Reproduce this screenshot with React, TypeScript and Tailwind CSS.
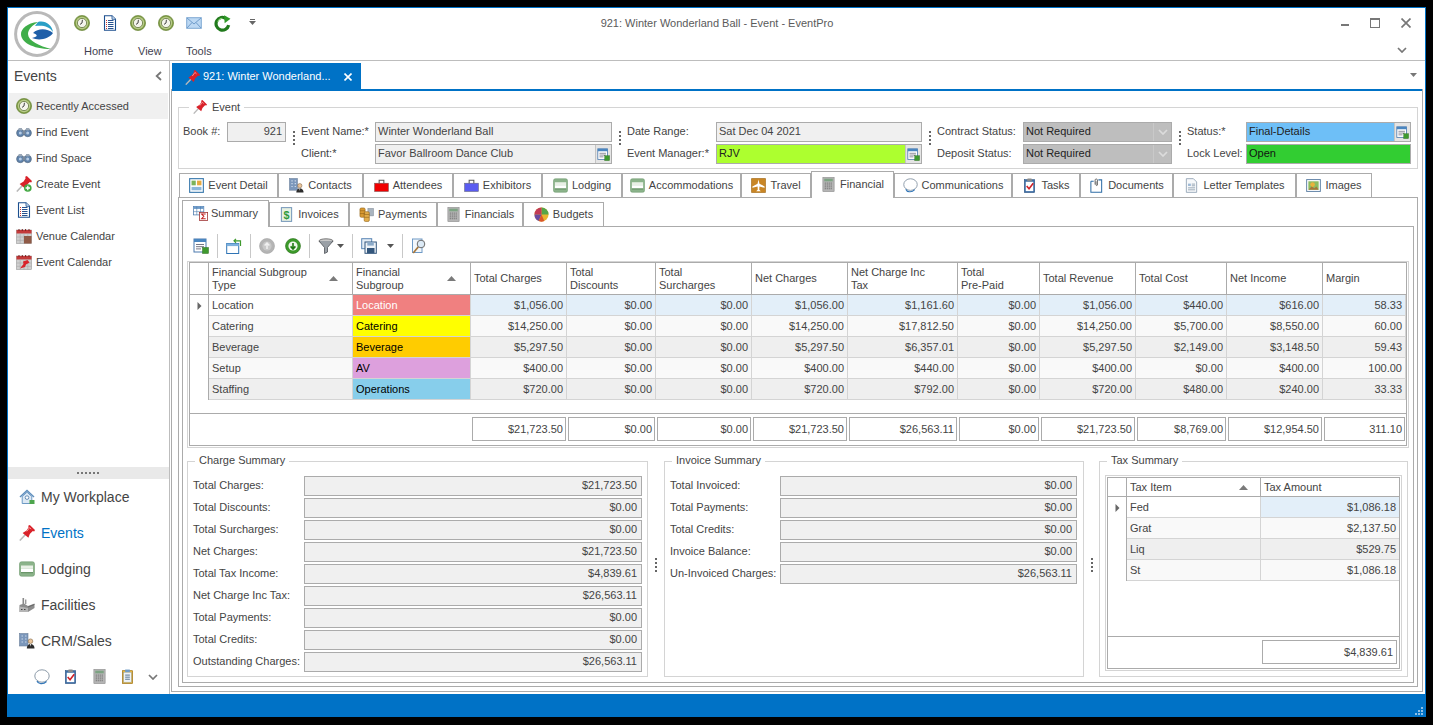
import React from "react";

type IP = { s?: number };
const Svg = ({ s = 16, children, vb = "0 0 16 16" }: { s?: number; children: React.ReactNode; vb?: string }) => (
  <svg viewBox={vb} width={s} height={s} className="shrink-0 block">{children}</svg>
);

const Clock = ({ s = 16 }: IP) => (
  <Svg s={s}>
    <circle cx="8" cy="8" r="7.6" fill="#7f9c46" stroke="#5f7d2c" strokeWidth="0.6" />
    <circle cx="8" cy="8" r="6.2" fill="#b9cc8a" />
    <circle cx="8" cy="8" r="4.6" fill="#f4f4ec" stroke="#55682f" strokeWidth="0.7" />
    <path d="M8.4 4.8 L8 8 L6 9.4" fill="none" stroke="#444" strokeWidth="1" />
  </Svg>
);
const DocList = ({ s = 16 }: IP) => (
  <Svg s={s}>
    <path d="M2.5 .8 H10 L13.5 4.3 V15.2 H2.5Z" fill="#fff" stroke="#1c4f8f" strokeWidth="1.1" />
    <path d="M10 .8 V4.3 H13.5" fill="#cfe0f2" stroke="#1c4f8f" strokeWidth=".8" />
    <path d="M6 5.5 H11.5 M6 7.5 H11.5 M6 9.5 H11.5 M6 11.5 H11.5 M6 13.5 H11.5" stroke="#27528f" strokeWidth="1" />
    <path d="M4 5.5 H5 M4 7.5 H5 M4 9.5 H5 M4 11.5 H5 M4 13.5 H5" stroke="#d2332b" strokeWidth="1" />
  </Svg>
);
const Mail = ({ s = 16 }: IP) => (
  <Svg s={s}>
    <rect x=".7" y="2.7" width="14.6" height="10.6" fill="#bcd8f3" stroke="#7fa9d3" />
    <path d="M1 3 L8 9 L15 3 M1 13 L6 7.5 M15 13 L10 7.5" fill="none" stroke="#6f9ccb" />
  </Svg>
);
const Refresh = ({ s = 16 }: IP) => (
  <Svg s={s}>
    <path d="M13.8 9.5 A6 6 0 1 1 11.5 3.4" fill="none" stroke="#217a1c" strokeWidth="3" />
    <path d="M9.5 .3 L15.5 3.5 L10 7.8Z" fill="#2f9a27" />
    <path d="M3.5 6.5 A5 5 0 0 1 8 3" fill="none" stroke="#8ed47c" strokeWidth="1" />
  </Svg>
);
const pinBody = "M3.6 8 L7.6 5.4 L9.6 2.2 L9.2 .8 L10.8 0 L16 5 L15.2 6.4 L13.8 6 L10.8 9 L9.4 12.8Z";
const Pin = ({ s = 16 }: IP) => (
  <Svg s={s}>
    <path d="M.8 15.6 L6.5 9.5" stroke="#b9b9b9" strokeWidth="1.5" />
    <path d={pinBody} fill="#d9222a" />
    <path d="M7.8 6.4 L10.6 2.6 L12.2 4" fill="none" stroke="#f59a9a" strokeWidth="1" />
  </Svg>
);
const PinPlus = ({ s = 16 }: IP) => (
  <Svg s={s}>
    <path d="M.8 15.6 L6.5 9.5" stroke="#b9b9b9" strokeWidth="1.5" />
    <path d={pinBody} fill="#d9222a" />
    <circle cx="11.8" cy="12" r="3.8" fill="#43a843" />
    <path d="M11.8 9.8 V14.2 M9.6 12 H14" stroke="#fff" strokeWidth="1.3" />
  </Svg>
);
const Binoc = ({ s = 16 }: IP) => (
  <Svg s={s}>
    <circle cx="4.3" cy="9" r="3.7" fill="#5f83ad" stroke="#566a80" strokeWidth=".7" />
    <circle cx="11.7" cy="9" r="3.7" fill="#5f83ad" stroke="#566a80" strokeWidth=".7" />
    <rect x="6.5" y="6.5" width="3" height="3.5" fill="#7b8a9c" />
    <rect x="2.6" y="4" width="3.4" height="2.4" fill="#9aa7b6" />
    <rect x="10" y="4" width="3.4" height="2.4" fill="#9aa7b6" />
    <circle cx="4.3" cy="9" r="1.5" fill="#b7cde6" />
    <circle cx="11.7" cy="9" r="1.5" fill="#b7cde6" />
  </Svg>
);
const CalBase = ({ s = 16, children }: IP & { children: React.ReactNode }) => (
  <Svg s={s}>
    <rect x=".5" y="2" width="15" height="13.5" fill="#cfcfcf" stroke="#9a9a9a" strokeWidth=".6" />
    <rect x=".5" y="2" width="15" height="3.5" fill="#c33a3a" />
    <path d="M3 1 V3 M6.3 1 V3 M9.6 1 V3 M13 1 V3" stroke="#7b2222" strokeWidth="1" />
    <path d="M.5 9 H15.5 M.5 12.3 H15.5 M4.2 5.5 V15.5 M8 5.5 V15.5 M11.8 5.5 V15.5" stroke="#a9a9a9" strokeWidth=".6" />
    {children}
  </Svg>
);
const CalVenue = ({ s = 16 }: IP) => (
  <CalBase s={s}><rect x="8" y="8" width="7.5" height="7.5" fill="#8f5a46" /></CalBase>
);
const CalEvent = ({ s = 16 }: IP) => (
  <CalBase s={s}><path d="M4 14.5 L7.5 10 L7 7.5 L11.5 6 L13.5 8.5 L10 10.5 L9 13Z" fill="#d9222a" /></CalBase>
);
const House = ({ s = 20 }: IP) => (
  <Svg s={s}>
    <path d="M1 8 L8 1.5 L15 8" fill="none" stroke="#5f8ebd" strokeWidth="1.5" />
    <path d="M3.2 7.5 L8 3.2 L12.8 7.5 V14.5 H3.2Z" fill="#dce8f4" stroke="#5f8ebd" strokeWidth=".9" />
    <circle cx="8" cy="8.6" r="1.8" fill="#fff" stroke="#4c79a7" strokeWidth=".8" />
    <rect x="10.5" y="11" width="5" height="4" fill="#4da54d" />
  </Svg>
);
const Bed = ({ s = 16 }: IP) => (
  <Svg s={s}>
    <rect x=".5" y=".8" width="15" height="14.4" rx="2" fill="#8bb38a" stroke="#6f9a6e" strokeWidth=".6" />
    <rect x="2" y="4.5" width="12" height="3.2" fill="#e9f0e6" />
    <rect x="2" y="7.7" width="12" height="3.5" fill="#fff" />
    <rect x="2" y="11.2" width="12" height="1" fill="#5c8a5b" />
  </Svg>
);
const Factory = ({ s = 16 }: IP) => (
  <Svg s={s}>
    <rect x="3.5" y="1" width="1.6" height="6" fill="#8a8a8a" />
    <rect x="6" y="2.5" width="1.4" height="4.5" fill="#9a9a9a" />
    <path d="M.5 8 L5 6.5 L9 9 L15.5 6.5 V11 L9 15 H.5Z" fill="#8c8c8c" />
    <path d="M.5 9.5 L9 11 V15 H.5Z" fill="#b5b5b5" />
    <path d="M9 10 L15.5 7.5" stroke="#5d5d5d" strokeWidth=".8" />
    <path d="M2 12.5 H3.5 M5 12.5 H6.5" stroke="#444" strokeWidth="1" />
  </Svg>
);
const Crm = ({ s = 16 }: IP) => (
  <Svg s={s}>
    <rect x=".5" y=".5" width="8.5" height="12.5" fill="#7b97bb" stroke="#6b7f99" strokeWidth=".6" />
    <path d="M2.5 3 H4 M6 3 H7.5 M2.5 6 H4 M6 6 H7.5 M2.5 9 H4 M6 9 H7.5" stroke="#c7d5e7" strokeWidth="1.2" />
    <circle cx="11.5" cy="8.2" r="2.3" fill="#e9c49b" stroke="#6b4e2b" strokeWidth=".5" />
    <path d="M7.8 15.5 C8 12 10 11 11.5 11 C13 11 15.5 12 15.5 15.5Z" fill="#2d2d2d" />
    <path d="M11 11 H12 L11.5 13.5Z" fill="#fff" />
  </Svg>
);
const Speech = ({ s = 16 }: IP) => (
  <Svg s={s}>
    <ellipse cx="8" cy="7" rx="7.2" ry="6.2" fill="#fff" stroke="#8c9aa8" strokeWidth="1" />
    <path d="M3 12 C4 15 9 16 12.5 12.5" fill="none" stroke="#3377b8" strokeWidth="1.2" />
  </Svg>
);
const Clip = ({ s = 16 }: IP) => (
  <Svg s={s}>
    <rect x="2.5" y="1.8" width="11" height="13.7" fill="#3d6ea6" stroke="#234d7f" strokeWidth=".6" />
    <rect x="4" y="4" width="8" height="10" fill="#fff" />
    <rect x="5.5" y=".5" width="5" height="3" rx=".8" fill="#8a8a8a" />
    <path d="M5 8.5 L7.5 11.5 L12 5.5" fill="none" stroke="#cf2229" strokeWidth="1.7" />
  </Svg>
);
const Calc = ({ s = 16 }: IP) => (
  <Svg s={s}>
    <rect x="2" y=".5" width="12" height="15" fill="#b5b5b5" stroke="#848484" strokeWidth=".6" />
    <rect x="3.5" y="1.8" width="9" height="2.8" fill="#7da383" />
    <path d="M4 6.5 H12 M4 8.5 H12 M4 10.5 H12 M4 12.5 H12" stroke="#6b6b6b" strokeWidth="1" strokeDasharray="1.2 .9" />
  </Svg>
);
const Note = ({ s = 16 }: IP) => (
  <Svg s={s}>
    <rect x="2.5" y="1.8" width="11" height="13.7" fill="#e8b93f" stroke="#9a6d12" strokeWidth=".7" />
    <rect x="4" y="3.6" width="8" height="10.4" fill="#eef3f8" stroke="#7d98b4" strokeWidth=".4" />
    <rect x="5.5" y=".6" width="5" height="2.6" fill="#6f9bc6" />
    <path d="M5.5 6.5 H10.5 M5.5 8.7 H10.5 M5.5 10.9 H10.5" stroke="#3f5f80" strokeWidth=".9" />
  </Svg>
);
const Detail = ({ s = 16 }: IP) => (
  <Svg s={s}>
    <rect x=".7" y=".7" width="14.6" height="14.6" fill="#fff" stroke="#3a79ad" strokeWidth="1.2" />
    <rect x="2.7" y="2.8" width="4.5" height="5" fill="#7bb35a" />
    <rect x="8.6" y="2.8" width="4.7" height="5" fill="#e6a93f" />
    <rect x="2.7" y="9.5" width="10.6" height="3.6" fill="#8bb7db" />
  </Svg>
);
const Badge = ({ s = 16, c = "#f00" }: IP & { c?: string }) => (
  <Svg s={s}>
    <rect x=".5" y="5.5" width="15" height="9" fill={c} stroke="#666" strokeWidth=".5" />
    <path d="M5.5 5.5 V2.5 H10.5 V5.5" fill="none" stroke="#555" strokeWidth="1.1" />
  </Svg>
);
const Plane = ({ s = 16 }: IP) => (
  <Svg s={s}>
    <rect x=".3" y=".3" width="15.4" height="15.4" rx="1" fill="#c98625" stroke="#8a5b16" strokeWidth=".5" />
    <path d="M8 1.5 L9 6 L14.5 9 V10.5 L9 9 L8.8 12.5 L10.5 14 H5.5 L7.2 12.5 L7 9 L1.5 10.5 V9 L7 6Z" fill="#fff" />
  </Svg>
);
const Docs = ({ s = 16 }: IP) => (
  <Svg s={s}>
    <path d="M2 3.5 H5 M10 2 H13.5 V15.3 H2 V3.5" fill="#fff" stroke="#2f6ea6" strokeWidth="1.1" />
    <path d="M6.5 7 V2 A1.3 1.3 0 0 1 9 2 V7.5 A.8 .8 0 0 1 7.5 7.5 V3.5" fill="none" stroke="#555" strokeWidth=".9" />
  </Svg>
);
const Template = ({ s = 16 }: IP) => (
  <Svg s={s}>
    <path d="M2.5 .7 H10 L13.5 4.2 V15.3 H2.5Z" fill="#f7f9fb" stroke="#8ea0b2" strokeWidth=".9" />
    <rect x="4.3" y="6" width="3" height="2.5" fill="#9db9d5" />
    <path d="M8.3 6.5 H11.8 M8.3 8.3 H11.8 M4.3 10.5 H11.8 M4.3 12.6 H11.8" stroke="#8b9bab" strokeWidth=".9" />
  </Svg>
);
const Images = ({ s = 16 }: IP) => (
  <Svg s={s}>
    <rect x=".7" y="1.7" width="14.6" height="12.6" fill="#fff" stroke="#5a7ea3" strokeWidth="1" />
    <rect x="2.5" y="3.5" width="11" height="9" fill="#8cbc62" />
    <circle cx="7" cy="7" r="2.5" fill="#e9b33c" />
    <path d="M2.5 12.5 L6 9 L9 11 L11 9 L13.5 12.5Z" fill="#a5763a" />
  </Svg>
);
const SumGrid = ({ s = 16 }: IP) => (
  <Svg s={s}>
    <rect x=".5" y=".5" width="11" height="9" fill="#fff" stroke="#4a79ad" strokeWidth=".8" />
    <rect x=".5" y=".5" width="11" height="2.6" fill="#6e9bc9" />
    <path d="M.5 6 H11.5 M4 .5 V9.5 M8 .5 V9.5" stroke="#4a79ad" strokeWidth=".6" />
    <rect x="7" y="6.8" width="8.6" height="8.6" fill="#fff" stroke="#9a2a2a" strokeWidth=".8" />
    <path d="M13.5 8.6 H9.2 L11.6 11 L9.2 13.5 H13.5" fill="none" stroke="#c42020" strokeWidth="1.1" />
  </Svg>
);
const Dollar = ({ s = 16 }: IP) => (
  <Svg s={s}>
    <rect x="2.5" y=".7" width="11" height="14.6" fill="#e7f1e3" stroke="#6a8fb5" />
    <text x="8" y="12.5" textAnchor="middle" fontSize="11.5" fontWeight="700" fill="#2f9a3c" fontFamily="Liberation Sans">$</text>
  </Svg>
);
const Coins = ({ s = 16 }: IP) => (
  <Svg s={s}>
    <rect x="9.5" y="1.5" width="6" height="8" fill="#a9b4bf" stroke="#7a8590" strokeWidth=".5" />
    <rect x="1" y="1" width="5.5" height="10" rx="1.5" fill="#d99a32" stroke="#8c5f16" strokeWidth=".6" />
    <rect x="5.5" y="5" width="5.5" height="10.5" rx="1.5" fill="#e2ad4a" stroke="#8c5f16" strokeWidth=".6" />
    <path d="M1 4 H6.5 M1 7 H6.5 M5.5 8 H11 M5.5 11 H11" stroke="#8c5f16" strokeWidth=".6" />
  </Svg>
);
const PieI = ({ s = 16 }: IP) => (
  <Svg s={s}>
    <circle cx="8" cy="8" r="7.5" fill="#e8b52f" />
    <path d="M8 8 L8 .5 A7.5 7.5 0 0 1 15.5 8Z" fill="#55a548" />
    <path d="M8 8 L.5 8 A7.5 7.5 0 0 1 8 .5Z" fill="#c23b57" />
    <path d="M8 8 L.5 8 A7.5 7.5 0 0 0 5 15Z" fill="#6a4aa0" />
    <path d="M8 8 L5 15 A7.5 7.5 0 0 0 11 15Z" fill="#d9562b" />
  </Svg>
);
const GridAdd = ({ s = 16 }: IP) => (
  <Svg s={s}>
    <rect x="1" y="1" width="12" height="13" fill="#fff" stroke="#4a79ad" />
    <rect x="1" y="1" width="12" height="3" fill="#4a86c0" />
    <path d="M3 6.5 H11 M3 8.7 H11 M3 10.9 H8" stroke="#667" strokeWidth=".9" />
    <rect x="9.5" y="9.5" width="6" height="6" fill="#3f9a2e" stroke="#2c6e20" strokeWidth=".5" />
  </Svg>
);
const WinArrow = ({ s = 16 }: IP) => (
  <Svg s={s}>
    <rect x=".7" y="5.5" width="12" height="10" fill="#fff" stroke="#2f74b5" />
    <rect x=".7" y="5.5" width="12" height="2.6" fill="#7eb1de" />
    <path d="M8 2.8 H14.5 V8 M10 .8 L8 2.8 L10 4.8" fill="none" stroke="#3f9a2e" strokeWidth="1.2" />
  </Svg>
);
const Round = ({ s = 16, up, on }: IP & { up?: boolean; on?: boolean }) => (
  <Svg s={s}>
    <circle cx="8" cy="8" r="7.5" fill={on ? "#3c9a2a" : "#b4b4b4"} stroke={on ? "#2a7019" : "#a5a5a5"} strokeWidth=".6" />
    <circle cx="8" cy="8" r="4.6" fill={on ? "#f0f7ec" : "#c8c8c8"} />
    {up ? (
      <path d="M8 11 V6 M5.6 7.6 L8 5 L10.4 7.6" fill="none" stroke="#f0f0f0" strokeWidth="1.5" />
    ) : (
      <path d="M8 5 V10 M5.6 8.4 L8 11 L10.4 8.4" fill="none" stroke="#1f7a12" strokeWidth="1.6" />
    )}
  </Svg>
);
const Funnel = ({ s = 16 }: IP) => (
  <Svg s={s}>
    <ellipse cx="8" cy="3" rx="7" ry="2.2" fill="#c9c9c9" stroke="#5f5f5f" strokeWidth=".8" />
    <path d="M1 3 L6.5 9.5 V15.5 L9.5 14 V9.5 L15 3" fill="#9aa0a6" stroke="#4f5358" strokeWidth=".8" />
  </Svg>
);
const Floppy = ({ s = 16 }: IP) => (
  <Svg s={s}>
    <rect x=".7" y=".7" width="10" height="10" fill="#e4edf6" stroke="#5a86b5" />
    <rect x="4" y="4" width="11.3" height="11.3" fill="#eef3f8" stroke="#33567c" />
    <rect x="6.3" y="4" width="6.5" height="3.6" fill="#8aa9c8" />
    <rect x="6" y="10" width="7.5" height="5.2" fill="#33567c" />
  </Svg>
);
const Search = ({ s = 16 }: IP) => (
  <Svg s={s}>
    <rect x="1.5" y="1" width="9.5" height="13.5" fill="#f3f7fb" stroke="#6f9ac6" />
    <circle cx="10" cy="6" r="3.8" fill="#dceaf6" stroke="#6c6c6c" strokeWidth="1" />
    <path d="M7.2 9 L2.2 15" stroke="#a6763a" strokeWidth="1.7" />
  </Svg>
);
const GridBtn = () => (
  <span className="flex w-[16px] h-full items-center justify-center bg-[#e4e4e4] border-l border-[#c4c4c4]">
    <GridAdd s={13} />
  </span>
);
const Chevron = ({ c = "#777" }: { c?: string }) => (
  <svg viewBox="0 0 10 6" width="10" height="6" className="block"><path d="M1 1 L5 5 L9 1" fill="none" stroke={c} strokeWidth="1.7" /></svg>
);
const Caret = ({ c = "#555" }: { c?: string }) => (
  <svg viewBox="0 0 7 4" width="7" height="4" className="block"><path d="M0 0 H7 L3.5 4Z" fill={c} /></svg>
);
const SortUp = () => (
  <svg viewBox="0 0 9 5" width="9" height="5" className="block shrink-0"><path d="M0 5 H9 L4.5 0Z" fill="#7a7a7a" /></svg>
);
const RowArrow = () => (
  <svg viewBox="0 0 4 8" width="5" height="8" className="block"><path d="M0 0 L4 4 L0 8Z" fill="#666" /></svg>
);
const Grip = () => (
  <span className="flex flex-col gap-[2px]">
    <span className="w-[2px] h-[2px] bg-[#666]" />
    <span className="w-[2px] h-[2px] bg-[#666]" />
    <span className="w-[2px] h-[2px] bg-[#666]" />
    <span className="w-[2px] h-[2px] bg-[#666]" />
  </span>
);

const sideItems: [React.ComponentType<IP>, string][] = [
  [Clock, "Recently Accessed"], [Binoc, "Find Event"], [Binoc, "Find Space"], [PinPlus, "Create Event"],
  [DocList, "Event List"], [CalVenue, "Venue Calendar"], [CalEvent, "Event Calendar"],
];
const navItems: [React.ComponentType<IP>, string][] = [
  [House, "My Workplace"], [Pin, "Events"], [Bed, "Lodging"], [Factory, "Facilities"], [Crm, "CRM/Sales"],
];

const Attendee = ({ s }: IP) => <Badge s={s} c="#f00000" />;
const Exhibitor = ({ s }: IP) => <Badge s={s} c="#5a5cf0" />;

const mainTabs: [React.ComponentType<IP>, string, string][] = [
  [Detail, "Event Detail", "w-[99px]"], [Crm, "Contacts", "w-[85px]"], [Attendee, "Attendees", "w-[90px]"],
  [Exhibitor, "Exhibitors", "w-[89px]"], [Bed, "Lodging", "w-[80px]"], [Bed, "Accommodations", "w-[119px]"],
  [Plane, "Travel", "w-[70px]"], [Calc, "Financial", "w-[83px]"], [Speech, "Communications", "w-[118px]"],
  [Clip, "Tasks", "w-[68px]"], [Docs, "Documents", "w-[93px]"], [Template, "Letter Templates", "w-[123px]"],
  [Images, "Images", "w-[76px]"],
];
const subTabs: [React.ComponentType<IP>, string, string][] = [
  [SumGrid, "Summary", "w-[87px]"], [Dollar, "Invoices", "w-[80px]"], [Coins, "Payments", "w-[88px]"],
  [Calc, "Financials", "w-[86px]"], [PieI, "Budgets", "w-[81px]"],
];

const cols = "grid grid-cols-[19px_144px_118px_96px_89px_96px_96px_110px_82px_96px_91px_96px_83px]";
const heads = ["Financial Subgroup Type", "Financial Subgroup", "Total Charges", "Total\nDiscounts", "Total\nSurcharges", "Net Charges", "Net Charge Inc\nTax", "Total\nPre-Paid", "Total Revenue", "Total Cost", "Net Income", "Margin"];
const rows: { t: string; g: string; c: string; fg: string; bg: string; v: string[] }[] = [
  { t: "Location", g: "Location", c: "bg-[#f08080]", fg: "text-white", bg: "bg-white", v: ["$1,056.00", "$0.00", "$0.00", "$1,056.00", "$1,161.60", "$0.00", "$1,056.00", "$440.00", "$616.00", "58.33"] },
  { t: "Catering", g: "Catering", c: "bg-[#ffff00]", fg: "text-black", bg: "bg-[#f9f9f9]", v: ["$14,250.00", "$0.00", "$0.00", "$14,250.00", "$17,812.50", "$0.00", "$14,250.00", "$5,700.00", "$8,550.00", "60.00"] },
  { t: "Beverage", g: "Beverage", c: "bg-[#ffcc00]", fg: "text-black", bg: "bg-[#efefef]", v: ["$5,297.50", "$0.00", "$0.00", "$5,297.50", "$6,357.01", "$0.00", "$5,297.50", "$2,149.00", "$3,148.50", "59.43"] },
  { t: "Setup", g: "AV", c: "bg-[#dda0dd]", fg: "text-black", bg: "bg-[#f9f9f9]", v: ["$400.00", "$0.00", "$0.00", "$400.00", "$440.00", "$0.00", "$400.00", "$0.00", "$400.00", "100.00"] },
  { t: "Staffing", g: "Operations", c: "bg-[#87ceeb]", fg: "text-black", bg: "bg-[#efefef]", v: ["$720.00", "$0.00", "$0.00", "$720.00", "$792.00", "$0.00", "$720.00", "$480.00", "$240.00", "33.33"] },
];
const totals = ["$21,723.50", "$0.00", "$0.00", "$21,723.50", "$26,563.11", "$0.00", "$21,723.50", "$8,769.00", "$12,954.50", "311.10"];
const charge: [string, string][] = [["Total Charges:", "$21,723.50"], ["Total Discounts:", "$0.00"], ["Total Surcharges:", "$0.00"], ["Net Charges:", "$21,723.50"], ["Total Tax Income:", "$4,839.61"], ["Net Charge Inc Tax:", "$26,563.11"], ["Total Payments:", "$0.00"], ["Total Credits:", "$0.00"], ["Outstanding Charges:", "$26,563.11"]];
const invoice: [string, string][] = [["Total Invoiced:", "$0.00"], ["Total Payments:", "$0.00"], ["Total Credits:", "$0.00"], ["Invoice Balance:", "$0.00"], ["Un-Invoiced Charges:", "$26,563.11"]];
const tax: [string, string, string][] = [["Fed", "$1,086.18", "bg-white"], ["Grat", "$2,137.50", "bg-[#f9f9f9]"], ["Liq", "$529.75", "bg-[#efefef]"], ["St", "$1,086.18", "bg-[#f9f9f9]"]];

const inputBase = "h-[20px] border border-[#ababab] flex items-center overflow-hidden";

const Field = ({ label, w, cls, value, right, btn, drop, lw }: { label: string; w: string; lw: string; cls: string; value: string; right?: boolean; btn?: boolean; drop?: boolean }) => (
  <div className="flex items-center h-[20px]">
    <span className={lw + " shrink-0 mb-[2px]"}>{label}</span>
    <div className={inputBase + " " + w + " " + cls}>
      <span className={"flex-1 px-[2px] mb-[2px] whitespace-nowrap " + (right ? "text-right" : "")}>{value}</span>
      {btn && <GridBtn />}
      {drop && <span className="w-[18px] h-full flex items-center justify-center border-l border-[#c9c9c9]"><Chevron c="#dcdcdc" /></span>}
    </div>
  </div>
);

const Sep = () => <span className="w-px h-[24px] bg-[#c8c8c8] mx-[8px]" />;

const SumBox = ({ title, w, iw, lw, data }: { title: string; w: string; iw: string; lw: string; data: [string, string][] }) => (
  <div className={"relative h-[216px] border border-[#d4d4d4] pt-[14px] pl-[5px] " + w}>
    <span className="absolute left-[7px] -top-[9px] bg-white px-[4px] leading-[14px]">{title}</span>
    <div className="flex flex-col gap-[2px]">
      {data.map(([l, v]) => (
        <div key={l} className="flex items-center h-[20px]">
          <span className={lw + " shrink-0 whitespace-nowrap mb-[2px]"}>{l}</span>
          <div className={"h-[20px] border border-[#ababab] bg-[#f0f0f0] text-right pl-[3px] pr-[4px] leading-[16px] " + iw}>{v}</div>
        </div>
      ))}
    </div>
  </div>
);

export default function App() {
  return (
    <div className="w-[1433px] h-[725px] bg-black pt-[7px] pl-[7px] overflow-hidden font-['Liberation_Sans',sans-serif] text-[11px] text-[#444]">
      <div className="w-[1419px] h-[710px] border border-[#0072c6] border-b-0 bg-white flex flex-col">
        {/* title bar and ribbon */}
        <header className="h-[53px] border-b border-[#bdbdbd] flex shrink-0 relative">
          <div className="w-[60px] pl-[6px] pt-[3px]">
            <svg viewBox="0 0 46 46" width="46" height="46" className="block">
              <circle cx="23" cy="23" r="21.4" fill="#fff" stroke="#b9b9b9" strokeWidth="3" />
              <path d="M24 11 C13 12 7 18 7 23 C7 31 18 38 37 38 C26 35 14 30 14 23 C14 18 19 14 24 11Z" fill="#3fae49" />
              <path d="M19 22 C24 17 33 17 39 22 C35 28 25 30 18 27 C23 26 25 24 19 22Z" fill="#1f5fa8" />
              <path d="M24 11 C31 9 38 14 39 21 C35 15 29 14 21 15Z" fill="#2a9fc6" />
            </svg>
          </div>
          <div className="w-[220px] flex flex-col">
            <div className="h-[30px] pt-[7px] flex items-start pl-[6px] gap-[12px]">
              <Clock /><DocList /><Clock /><Clock /><Mail /><Refresh s={17} />
              <span className="ml-[6px] mt-[4px] flex flex-col items-center gap-[1px]"><span className="w-[5px] h-px bg-[#666]" /><Caret c="#666" /></span>
            </div>
            <nav className="flex text-[#3f3f50] pt-[5px] pl-[16px]">
              <span className="w-[54px]">Home</span><span className="w-[48px]">View</span><span>Tools</span>
            </nav>
          </div>
          <div className="flex-1 text-center pt-[7px] text-[#5a5a5a] pr-[279px]">921: Winter Wonderland Ball - Event - EventPro</div>
          <div className="absolute right-[14px] top-[10px] w-[70px] flex justify-between items-center">
            <span className="w-[8px] h-[2px] bg-[#777] mt-[4px]" />
            <span className="w-[10px] h-[10px] border border-[#777] border-t-[2px]" />
            <svg viewBox="0 0 10 10" width="10" height="10" className="block"><path d="M.5 .5 L9.5 9.5 M9.5 .5 L.5 9.5" stroke="#777" strokeWidth="1.7" /></svg>
          </div>
          <div className="absolute right-[18px] top-[39px]"><Chevron /></div>
        </header>

        <div className="flex flex-1 min-h-0">
          {/* sidebar */}
          <aside className="w-[162px] h-[633px] border-r border-[#bdbdbd] flex flex-col shrink-0">
            <div className="h-[32px] flex items-center justify-between pl-[6px] pr-[7px] pb-[2px] text-[14px]">
              <span>Events</span>
              <svg viewBox="0 0 7 10" width="7" height="10" className="block"><path d="M6 1 L1.7 5 L6 9" fill="none" stroke="#777" strokeWidth="1.8" /></svg>
            </div>
            <div className="flex flex-col">
              {sideItems.map(([I, t], i) => (
                <div key={t} className={"h-[26px] flex items-center gap-[4px] pl-[7px] ml-px mr-px " + (i === 0 ? "bg-[#f0f0f0]" : "")}>
                  <I />
                  <span className="leading-none">{t}</span>
                </div>
              ))}
            </div>
            <div className="flex-1" />
            <div className="h-[12px] bg-[#e9e9e9] flex items-center justify-center gap-px">
              {[0, 1, 2, 3, 4, 5].map((n) => <span key={n} className="w-[2px] h-[2px] bg-[#777] mr-px" />)}
            </div>
            <div className="flex flex-col">
              {navItems.map(([I, t]) => (
                <div key={t} className={"h-[36px] flex items-center gap-[6px] pl-[11px] text-[14px] " + (t === "Events" ? "text-[#0072c6]" : "")}>
                  <I s={16} /><span>{t}</span>
                </div>
              ))}
            </div>
            <div className="h-[35px] flex items-center pl-[26px] pr-[11px] justify-between">
              <Speech /><Clip s={15} /><Calc s={15} /><Note s={15} /><Chevron />
            </div>
          </aside>

          {/* main */}
          <main className="ml-[1px] w-[1252px] h-[633px] flex flex-col">
            <div className="h-[30px] pt-[2px] flex shrink-0 relative">
              <div className="w-[189px] ml-px h-[28px] bg-[#0072c6] text-white flex items-center pl-[13px] pr-[9px] gap-[3px]">
                <Pin s={15} /><span className="flex-1 whitespace-nowrap mb-[2px]">921: Winter Wonderland...</span>
                <svg viewBox="0 0 8 8" width="8" height="8" className="block"><path d="M.5 .5 L7.5 7.5 M7.5 .5 L.5 7.5" stroke="#fff" strokeWidth="1.6" /></svg>
              </div>
              <div className="flex-1 flex justify-end pr-[6px] pt-[10px]"><Caret c="#777" /></div>
            </div>
            <div className="h-[603px] border-l border-r border-b border-[#ababab] -mt-[2px] relative">
              <div className="h-[2px] bg-[#0072c6]" />
              {/* event group */}
              <div className="relative ml-[6px] mt-[16px] w-[1240px] h-[62px] border border-[#d4d4d4] pt-[14px] pl-[4px] flex">
                <div className="absolute left-[10px] -top-[10px] bg-white px-[4px] flex items-center gap-[5px] h-[18px]"><Pin s={14} /><span>Event</span></div>
                <div className="flex items-start w-[103px]">
                  <span className="w-[44px] leading-[18px]">Book #:</span>
                  <div className={inputBase + " w-[59px] bg-[#f0f0f0] justify-end px-[3px]"}><span className="mb-[2px]">921</span></div>
                </div>
                <div className="w-[15px] flex justify-center items-center pb-[14px]"><Grip /></div>
                <div className="flex flex-col gap-[2px]">
                  <Field label="Event Name:*" lw="w-[74px]" w="w-[237px]" cls="bg-[#f0f0f0]" value="Winter Wonderland Ball" />
                  <Field label="Client:*" lw="w-[74px]" w="w-[237px]" cls="bg-[#f0f0f0]" value="Favor Ballroom Dance Club" btn />
                </div>
                <div className="w-[15px] flex justify-center items-center pb-[14px]"><Grip /></div>
                <div className="flex flex-col gap-[2px]">
                  <Field label="Date Range:" lw="w-[89px]" w="w-[206px]" cls="bg-[#f0f0f0]" value="Sat Dec 04 2021" />
                  <Field label="Event Manager:*" lw="w-[89px]" w="w-[206px]" cls="bg-[#adff2f] text-[#222]" value="RJV" btn />
                </div>
                <div className="w-[15px] flex justify-center items-center pb-[14px]"><Grip /></div>
                <div className="flex flex-col gap-[2px]">
                  <Field label="Contract Status:" lw="w-[86px]" w="w-[149px]" cls="bg-[#bebebe] text-[#222]" value="Not Required" drop />
                  <Field label="Deposit Status:" lw="w-[86px]" w="w-[149px]" cls="bg-[#bebebe] text-[#222]" value="Not Required" drop />
                </div>
                <div className="w-[15px] flex justify-center items-center pb-[14px]"><Grip /></div>
                <div className="flex flex-col gap-[2px]">
                  <Field label="Status:*" lw="w-[59px]" w="w-[165px]" cls="bg-[#6ebff7] text-[#222]" value="Final-Details" btn />
                  <Field label="Lock Level:" lw="w-[59px]" w="w-[165px]" cls="bg-[#32cd32] text-[#111]" value="Open" />
                </div>
              </div>

              {/* main tabs */}
              <div className="ml-[7px] mt-[2px] h-[27px] flex relative z-10 items-start">
                {mainTabs.map(([I, t, w]) => t === "Financial" ? (
                  <div key={t} className={w + " h-[27px] bg-white border border-b-0 border-[#ababab] flex items-center justify-center gap-[4px] pb-[2px]"}><I s={15} /><span>{t}</span></div>
                ) : (
                  <div key={t} className={w + " h-[24px] mt-[2px] border border-b-0 border-[#ababab] flex items-center justify-center gap-[4px]"}><I s={15} /><span className="whitespace-nowrap">{t}</span></div>
                ))}
              </div>
              {/* tab panel */}
              <div className="ml-[6px] -mt-px w-[1240px] h-[490px] border border-[#ababab] pt-[2px]">
                <div className="ml-[3px] h-[27px] flex relative z-10 items-start">
                  {subTabs.map(([I, t, w]) => t === "Summary" ? (
                    <div key={t} className={w + " h-[27px] bg-white border border-b-0 border-[#ababab] flex items-center justify-center gap-[3px] pb-[2px]"}><I s={15} /><span>{t}</span></div>
                  ) : (
                    <div key={t} className={w + " h-[24px] mt-[2px] border border-b-0 border-[#ababab] flex items-center justify-center gap-[4px]"}><I s={15} /><span>{t}</span></div>
                  ))}
                </div>
                <div className="ml-[3px] -mt-px w-[1232px] h-[457px] border border-[#ababab]">
                  {/* toolbar */}
                  <div className="h-[34px] flex items-center pl-[10px] pt-[3px]">
                    <GridAdd /><Sep /><WinArrow /><Sep /><Round up /><span className="w-[10px]" /><Round on /><Sep /><Funnel /><span className="ml-[3px]"><Caret /></span><Sep /><Floppy /><span className="ml-[10px]"><Caret /></span><Sep /><Search />
                  </div>
                  {/* main grid */}
                  <div className="ml-[4px] w-[1222px] h-[187px] border border-[#d4d4d4] px-px pb-px">
                    <div className="w-[1218px] h-[184px] border border-[#ababab] flex flex-col">
                      <div className={cols + " h-[32px] border-b border-[#ababab] shrink-0 leading-[13px]"}>
                        <div className="border-r border-[#ababab]" />
                        {heads.map((h, i) => (
                          <div key={h} className={"flex items-center px-[3px] justify-between " + (i < 11 ? "border-r border-[#ababab]" : "")}>
                            <span className={"whitespace-pre-line " + (i < 2 ? "w-[105px]" : "")}>{h}</span>
                            {i < 2 && <span className="mr-[11px]"><SortUp /></span>}
                          </div>
                        ))}
                      </div>
                      {rows.map((r, ri) => (
                        <div key={r.t} className={cols + " h-[21px] shrink-0"}>
                          <div className="flex items-center justify-center border-r border-[#ababab]">{ri === 0 && <RowArrow />}</div>
                          <div className={r.bg + " border-r border-b border-[#d4d4d4] px-[3px] leading-[20px]"}>{r.t}</div>
                          <div className={r.c + " " + r.fg + " border-r border-b border-[#d4d4d4] px-[3px] leading-[20px]"}>{r.g}</div>
                          {r.v.map((v, i) => (
                            <div key={i} className={(ri === 0 ? "bg-[#e3eff9]" : r.bg) + " border-r border-b border-[#d4d4d4] px-[3px] leading-[20px] text-right"}>{v}</div>
                          ))}
                        </div>
                      ))}
                      <div className="h-[14px] shrink-0 border-b border-[#ababab]" />
                      <div className={cols + " flex-1 pt-[3px]"}>
                        <div /><div /><div />
                        {totals.map((t, i) => (
                          <div key={i} className="mx-px h-[24px] border border-[#ababab] text-right pl-[3px] pr-[2px] leading-[22px]">{t}</div>
                        ))}
                      </div>
                    </div>
                  </div>
                  {/* summaries */}
                  <div className="ml-[4px] mt-[13px] flex">
                    <SumBox title="Charge Summary" w="w-[461px]" lw="w-[111px]" iw="w-[338px]" data={charge} />
                    <div className="w-[16px] flex justify-center items-center pb-[8px]"><Grip /></div>
                    <SumBox title="Invoice Summary" w="w-[420px]" lw="w-[110px]" iw="w-[297px]" data={invoice} />
                    <div className="w-[15px] flex justify-center items-center pb-[8px]"><Grip /></div>
                    <div className="relative w-[309px] h-[216px] border border-[#d4d4d4] pt-[13px] pl-[5px]">
                      <span className="absolute left-[7px] -top-[9px] bg-white px-[4px] leading-[14px]">Tax Summary</span>
                      <div className="w-[297px] h-[196px] border border-[#d4d4d4] p-px">
                        <div className="w-[293px] h-[192px] border border-[#ababab] flex flex-col">
                          <div className="grid grid-cols-[19px_134px_138px] h-[19px] border-b border-[#ababab] shrink-0">
                            <div className="border-r border-[#ababab]" />
                            <div className="border-r border-[#ababab] px-[3px] flex items-center justify-between"><span>Tax Item</span><span className="mr-[9px]"><SortUp /></span></div>
                            <div className="px-[3px] flex items-center">Tax Amount</div>
                          </div>
                          {tax.map(([n, v, c], i) => (
                            <div key={n} className="grid grid-cols-[19px_134px_138px] h-[21px] shrink-0">
                              <div className="flex items-center justify-center border-r border-[#ababab]">{i === 0 && <RowArrow />}</div>
                              <div className={c + " border-r border-b border-[#d4d4d4] px-[3px] leading-[20px]"}>{n}</div>
                              <div className={(i === 0 ? "bg-[#e3eff9]" : c) + " border-b border-[#d4d4d4] px-[3px] leading-[20px] text-right"}>{v}</div>
                            </div>
                          ))}
                          <div className="flex-1 border-b border-[#ababab]" />
                          <div className="h-[31px] shrink-0 flex justify-end pt-[3px] pr-[2px]">
                            <div className="w-[135px] h-[24px] border border-[#ababab] text-right px-[3px] leading-[22px]">$4,839.61</div>
                          </div>
                        </div>
                      </div>
                    </div>
                  </div>
                </div>
              </div>
            </div>
          </main>
        </div>

        <footer className="h-[23px] bg-[#0072c6] shrink-0 relative">
          <div className="absolute right-[2px] bottom-[2px] grid grid-cols-3 gap-px">
            <span /><span /><span className="w-[2px] h-[2px] bg-[#8fc0e6]" />
            <span /><span className="w-[2px] h-[2px] bg-[#8fc0e6]" /><span className="w-[2px] h-[2px] bg-[#8fc0e6]" />
            <span className="w-[2px] h-[2px] bg-[#8fc0e6]" /><span className="w-[2px] h-[2px] bg-[#8fc0e6]" /><span className="w-[2px] h-[2px] bg-[#8fc0e6]" />
          </div>
        </footer>
      </div>
    </div>
  );
}
